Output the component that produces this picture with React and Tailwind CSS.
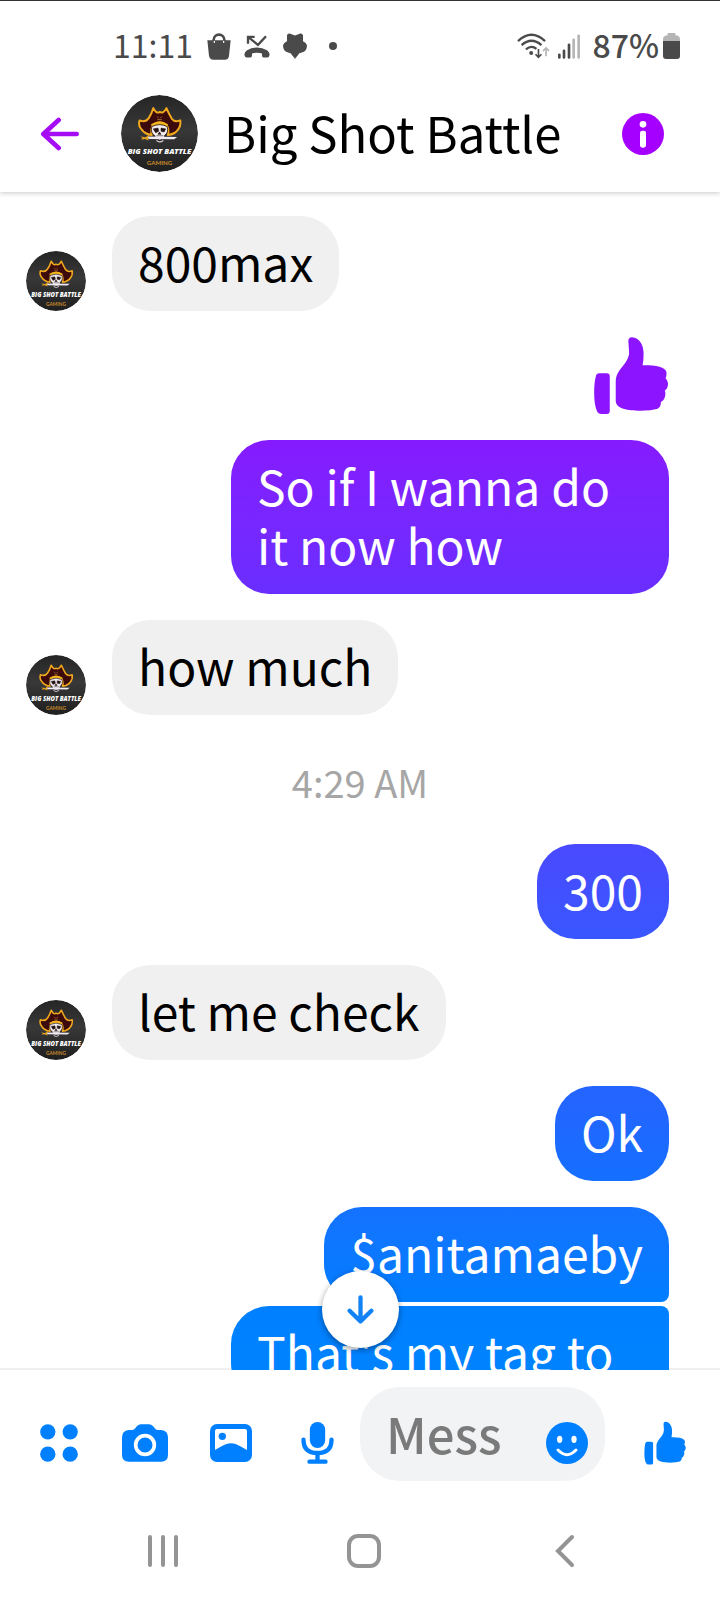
import React from "react";

const FONT = "font-['Noto_Sans_CJK_JP','Noto_Sans',sans-serif]";

function Avatar({ className }) {
  return (
    <svg viewBox="0 0 100 100" className={`shrink-0 rounded-full ${className}`} role="img" aria-label="Big Shot Battle Gaming">
      <defs>
        <linearGradient id="coal" x1="0" y1="0" x2="0" y2="1">
          <stop offset="0" stopColor="#252525" />
          <stop offset="0.45" stopColor="#383838" />
          <stop offset="1" stopColor="#1f1f1f" />
        </linearGradient>
      </defs>
      <circle cx="50" cy="50" r="50" fill="url(#coal)" />
      <path
        d="M24 33Q32 36 36 30Q40 24 42 17Q46 25 50 22Q55 25 59 17Q62 24 66 31Q70 36 77 33Q78 40 74 45Q70 51 61 52Q63 43 58 38Q50 33 43 38Q38 43 40 52Q31 51 27 45Q22 40 24 33Z"
        fill="#3d0a0c"
        stroke="#f0a81c"
        strokeWidth="2.6"
        strokeLinejoin="round"
      />
      <path d="M47 28l2 2m4-2l-2 2m-4 2h6" stroke="#a8743c" strokeWidth="1.2" />
      <path d="M39 38Q50 31 61 38L60 41Q50 36 40 41Z" fill="#f5b51e" />
      <path d="M40 41Q50 36 60 41Q62 49 57 52L56 57Q50 60 45 57L44 53Q38 50 40 41Z" fill="#f3ecee" stroke="#17090b" strokeWidth="1" />
      <path d="M42 44l6-1 1 4-4 2zM52 43l6 1-2 4-4-1zM50 48l2 3h-4zM46 53h9" fill="#241316" stroke="#241316" strokeWidth="0.8" />
      <path d="M34 54L73 54.500L69 57.500L36 57Z" fill="#efeaf2" />
      <path d="M25 54l7 1 5-4-2 5 1 3-5-2-5 1 2-2z" fill="#e2a11f" />
      <path d="M46 59q4 4 9 0" stroke="#d8d2d8" strokeWidth="1.5" fill="none" />
      <text x="50" y="77" textAnchor="middle" fill="#ffffff" className="font-['Open_Sans',sans-serif] text-[10px] font-extrabold italic">
        BIG SHOT BATTLE
      </text>
      <text x="50" y="91" textAnchor="middle" fill="#c98a2b" className="font-['Lato',sans-serif] text-[8px] font-bold">
        GAMING
      </text>
    </svg>
  );
}

function Thumb({ className }) {
  return (
    <svg viewBox="0 0 226 232" className={className} fill="currentColor" aria-hidden="true">
      <path d="M17 109h23q9 0 9 9v105q0 9-9 9H24q-10 0-14-10Q2 205 2 168q0-32 5-49 2-10 10-10z" />
      <path d="M105 12Q105 1 116 1C136 2 151 22 151 50Q151 70 148 85C180 84 203 88 214 97Q223 104 219 120Q214 124 220 128Q227 138 223 151Q221 158 215 161Q218 168 216 178Q213 191 203 196Q204 211 193 216Q175 222 140 222C105 222 67 217 67 192V134C67 108 84 95 97 76Q109 58 107 42Z" />
    </svg>
  );
}

function StatusBar() {
  return (
    <div className="relative z-20 flex h-[75px] items-center justify-between border-t border-[#333] bg-white pt-3 pr-10 pl-[113px] text-[32px] leading-[38px] text-[#4a4a4a]">
      <div className="flex items-center">
        <span>11:11</span>
        <svg viewBox="0 0 72 81" className="mt-1 ml-3.5 h-[27px] w-6" fill="#4a4a4a" aria-hidden="true">
          <path d="M1 22h70l-5 46q-1 12-13 12H20Q8 80 6 68z" />
          <path d="M20 34V21a16 16 0 0 1 32 0v13" fill="none" stroke="#4a4a4a" strokeWidth="8" />
          <path d="M22 25v3M50 25v3" stroke="#fff" strokeWidth="4" strokeLinecap="round" />
        </svg>
        <svg viewBox="0 0 78 68" className="mt-1 ml-[13px] h-[23px] w-[26px]" fill="none" stroke="#4a4a4a" aria-hidden="true">
          <path d="M12 26V5h20M12 5l30 24L66 3" strokeWidth="7" />
          <path d="M2 62q-3-10 7-17 14-8 30-8t30 8q10 7 7 17-1 5-6 5H59q-5 0-5-6V55q-15-4-30 0v6q0 6-5 6H8q-5 0-6-5z" fill="#4a4a4a" stroke="none" />
        </svg>
        <svg viewBox="0 0 72 80" className="mt-1 ml-[13px] h-[27px] w-6" aria-hidden="true">
          <path d="M4 50l20 10 12 18 12-18 20-10z" fill="#777" />
          <path d="M12 6q2-6 8-5l16 6 16-6q6-1 8 5l0 18q11 5 12 14-1 13-9 18l-14 4q-6 8-13 14-7-6-13-14L9 56Q1 51 0 38q1-9 12-14z" fill="#4a4a4a" />
        </svg>
        <span className="mt-1 ml-[22px] size-2 rounded-full bg-[#4a4a4a]" />
      </div>
      <div className="flex items-center">
        <svg viewBox="0 0 100 78" className="mt-1 h-[26px] w-[33px]" fill="none" stroke="#4a4a4a" aria-hidden="true">
          <path d="M3 24Q44-14 85 24M14 36q30-26 60 0M27 49q17-14 32-1" strokeWidth="7" />
          <circle cx="43" cy="60" r="6" fill="#4a4a4a" stroke="none" />
          <path d="M65 48v24M56 64l9 9 9-9" strokeWidth="5" />
          <path d="M88 70V46M79 54l9-9 9 9" stroke="#b5b5b5" strokeWidth="5" />
        </svg>
        <svg viewBox="0 0 66 74" className="mt-1 ml-2 h-[25px] w-[22px]" strokeWidth="8" strokeLinecap="round" aria-hidden="true">
          <path d="M4 62v8M18 50v20M33 32v38" stroke="#4a4a4a" />
          <path d="M47 17v53M62 5v65" stroke="#b5b5b5" />
        </svg>
        <span className="ml-3 font-medium">87%</span>
        <svg viewBox="0 0 51 78" className="mt-1 ml-1 h-[26px] w-[17px]" aria-hidden="true">
          <path d="M14 0h23v7q14 1 14 12v8H0v-8Q0 8 14 7z" fill="#b5b5b5" />
          <path d="M0 24h51v45q0 9-9 9H9q-9 0-9-9z" fill="#4a4a4a" />
        </svg>
      </div>
    </div>
  );
}

function Header() {
  return (
    <header className="relative z-10 flex h-[117px] items-center bg-white pr-14 pl-10 shadow-[0_1px_5px_rgba(0,0,0,0.22)]">
      <button aria-label="Back" className="shrink-0 text-[#a50bf5]">
        <svg viewBox="0 0 117 102" className="h-[34px] w-[39px]" fill="none" stroke="currentColor" strokeWidth="14" strokeLinecap="round" strokeLinejoin="round">
          <path d="M56 9L10 51l46 42M10 51h100" />
        </svg>
      </button>
      <Avatar className="ml-[42px] size-[77px]" />
      <h1 className="ml-[26px] flex-1 pb-1 text-[49px] leading-[60px] whitespace-nowrap text-black">Big Shot Battle</h1>
      <button aria-label="Conversation information" className="shrink-0">
        <svg viewBox="0 0 126 126" className="size-[42px]">
          <circle cx="63" cy="63" r="63" fill="#a500ff" />
          <circle cx="63" cy="34" r="10" fill="#fff" />
          <rect x="54" y="53" width="18" height="51" rx="7" fill="#fff" />
        </svg>
      </button>
    </header>
  );
}

function Received({ children }) {
  return (
    <div className="flex items-end gap-[26px]">
      <Avatar className="size-[60px]" />
      <p className="rounded-[38px] bg-[#f0f0f0] px-[26px] pt-4 pb-5 text-black">{children}</p>
    </div>
  );
}

function Sent({ children, className }) {
  return (
    <p className={`max-w-[438px] self-end bg-linear-to-b px-[26px] pt-4 pb-5 text-white ${className}`}>{children}</p>
  );
}

function Conversation() {
  return (
    <main className="relative -mb-0.5 min-h-0 flex-1 overflow-hidden">
      <div className="flex flex-col gap-[26px] pt-6 pr-[51px] pl-[26px] text-5xl leading-[59px]">
        <Received>800max</Received>
        <div role="img" aria-label="Thumbs up" className="self-end text-[#8d14ff]">
          <Thumb className="h-[77px] w-[76px]" />
        </div>
        <Sent className="rounded-[38px] from-[#861aff] to-[#692eff]">So if I wanna do it now how</Sent>
        <Received>how much</Received>
        <time className="self-center pt-1 pl-[25px] text-[38px] leading-[73px] text-[#a6a6a6]">4:29 AM</time>
        <Sent className="rounded-[38px] from-[#4a49ff] to-[#3857ff]">300</Sent>
        <Received>let me check</Received>
        <Sent className="rounded-[38px] from-[#2563ff] to-[#146fff]">Ok</Sent>
        <div className="flex flex-col gap-1">
          <Sent className="rounded-[38px] rounded-br-lg from-[#1472ff] to-[#007eff]">$anitamaeby</Sent>
          <Sent className="w-full rounded-[38px] rounded-r-lg from-[#0080ff] to-[#0084ff]">That&apos;s my tag to</Sent>
        </div>
      </div>
      <div className="absolute inset-x-0 bottom-[22px] flex justify-center">
        <button aria-label="Scroll to latest" className="flex size-[77px] items-center justify-center rounded-full bg-white text-[#1283f5] shadow-[0_2px_6px_rgba(0,0,0,0.4)]">
          <svg viewBox="0 0 80 88" className="h-[29px] w-[27px]" fill="none" stroke="currentColor" strokeWidth="13" strokeLinecap="round" strokeLinejoin="round">
            <path d="M40 7v73M7 48l33 32 33-32" />
          </svg>
        </button>
      </div>
    </main>
  );
}

function Tool({ label, children }) {
  return (
    <button aria-label={label} className="mb-[17px] flex h-[42px] w-12 shrink-0 items-center justify-center">
      {children}
    </button>
  );
}

function Composer() {
  return (
    <footer className="flex items-end border-t-2 border-[#f0f0f1] pt-[17px] pr-[31px] pl-[35px] text-[#0080ff]">
      <div className="mr-[19px] flex gap-[38px]">
        <Tool label="More actions">
          <svg viewBox="0 0 112 112" className="size-[38px]" fill="currentColor">
            <circle cx="23" cy="23" r="22.500" />
            <circle cx="89" cy="23" r="22.500" />
            <circle cx="23" cy="89" r="22.500" />
            <circle cx="89" cy="89" r="22.500" />
          </svg>
        </Tool>
        <Tool label="Camera">
          <svg viewBox="0 0 138 114" className="h-[38px] w-[46px]" fill="currentColor">
            <path d="M20 18h11q5 0 10-7l4-5q5-5 12-5h24q7 0 12 5l4 5q5 7 10 7h11q20 2 20 22v52q0 21-21 21H21Q0 113 0 92V40q0-20 20-22z" />
            <circle cx="69" cy="63" r="28" fill="none" stroke="#fff" strokeWidth="11" />
          </svg>
        </Tool>
        <Tool label="Gallery">
          <svg viewBox="0 0 126 114" className="h-[38px] w-[42px]" fill="currentColor">
            <rect x="0" y="0" width="126" height="114" rx="21" />
            <path d="M15 21q0-6 6-6h84q6 0 6 6v57Q88 65 77 60q-14-5-28 0Q37 65 15 78z" fill="#fff" />
            <circle cx="37" cy="37" r="11" />
          </svg>
        </Tool>
        <Tool label="Voice message">
          <svg viewBox="0 0 98 126" className="h-[42px] w-[33px]" fill="none" stroke="currentColor" strokeLinecap="round">
            <rect x="26" y="0" width="46" height="78" rx="23" fill="currentColor" stroke="none" />
            <path d="M7 53q0 40 42 40t42-40" strokeWidth="13" />
            <path d="M49 95v18M25 119h48" strokeWidth="13" />
          </svg>
        </Tool>
      </div>
      <div className="mr-9 flex h-[94px] min-w-0 flex-1 items-end rounded-[40px] bg-[#f2f3f5] pr-[17px] pl-[26px]">
        <input
          type="text"
          aria-label="Message"
          placeholder="Mess"
          className="h-[94px] min-w-0 flex-1 bg-transparent pb-1 text-[49px] font-medium text-black outline-none placeholder:text-[#7a7a7a]"
        />
        <button aria-label="Emoji" className="mb-[17px] shrink-0">
          <svg viewBox="0 0 126 126" className="size-[42px]">
            <circle cx="63" cy="63" r="63" fill="#0080ff" />
            <ellipse cx="41" cy="52" rx="8" ry="11" fill="#fff" />
            <ellipse cx="84" cy="52" rx="8" ry="11" fill="#fff" />
            <path d="M36 84q27 28 54 0" fill="none" stroke="#fff" strokeWidth="9" strokeLinecap="round" />
          </svg>
        </button>
      </div>
      <Tool label="Send thumbs up">
        <Thumb className="h-11 w-[42px]" />
      </Tool>
    </footer>
  );
}

function SystemNav() {
  return (
    <nav aria-label="System" className="mt-[21px] flex h-[98px] items-center justify-center gap-[165px] pl-2 text-[#949494]">
      <button aria-label="Recent apps">
        <svg viewBox="0 0 36 36" className="size-9" stroke="currentColor" strokeWidth="4" strokeLinecap="round">
          <path d="M5 4v28M18 4v28M31 4v28" />
        </svg>
      </button>
      <button aria-label="Home">
        <svg viewBox="0 0 36 36" className="size-9" fill="none" stroke="currentColor" strokeWidth="4">
          <rect x="3" y="3" width="30" height="30" rx="9" />
        </svg>
      </button>
      <button aria-label="Back to previous screen">
        <svg viewBox="0 0 36 36" className="size-9" fill="none" stroke="currentColor" strokeWidth="4" strokeLinecap="round">
          <path d="M25 4L11 18l14 14" />
        </svg>
      </button>
    </nav>
  );
}

export default function App() {
  return (
    <div className={`flex h-screen flex-col overflow-hidden bg-white ${FONT}`}>
      <StatusBar />
      <Header />
      <Conversation />
      <Composer />
      <SystemNav />
    </div>
  );
}
